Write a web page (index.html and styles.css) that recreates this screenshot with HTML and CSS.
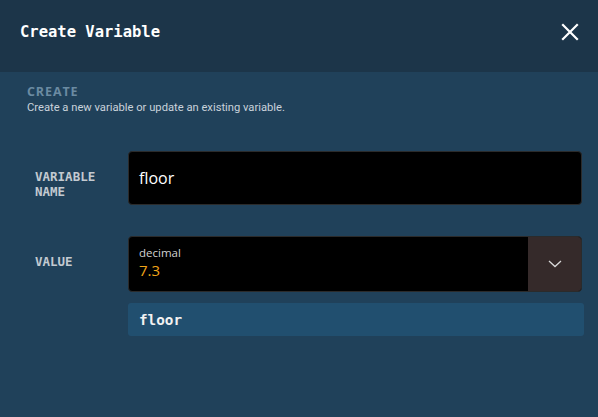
FILE: index.html
```html
<!DOCTYPE html>
<html>
<head>
<meta charset="utf-8">
<link rel="stylesheet" href="styles.css">
</head>
<body>
<div class="dialog">
  <header class="dlg-header">
    <h1 class="dlg-title">Create Variable</h1>
    <button class="close-btn" aria-label="Close">
      <svg width="18" height="18" viewBox="0 0 18 18"><path d="M2 2 L16 16 M16 2 L2 16" stroke="#fff" stroke-width="2.2" stroke-linecap="square" fill="none"/></svg>
    </button>
  </header>
  <main class="dlg-body">
    <section class="intro">
      <div class="intro-title">CREATE</div>
      <div class="intro-text">Create a new variable or update an existing variable.</div>
    </section>
    <div class="form">
      <div class="form-label">VARIABLE<br>NAME</div>
      <div class="field">
        <div class="input text-input">floor</div>
      </div>
      <div class="form-label">VALUE</div>
      <div class="field">
        <div class="input value-input">
          <div class="value-main">
            <div class="value-type">decimal</div>
            <div class="value-num">7.3</div>
          </div>
          <div class="value-drop">
            <svg width="14" height="8" viewBox="0 0 14 8"><path d="M1 1 L7 6.5 L13 1" stroke="#d8d8d8" stroke-width="1.3" fill="none"/></svg>
          </div>
        </div>
        <div class="chip">floor</div>
      </div>
    </div>
  </main>
</div>
</body>
</html>
```
FILE: styles.css
```css
* { box-sizing: border-box; }
html, body { margin: 0; padding: 0; }
body {
  width: 598px;
  height: 417px;
  background: #20415a;
  font-family: "Open Sans", "Noto Sans", sans-serif;
  overflow: hidden;
}
.dialog {
  display: flex;
  flex-direction: column;
  height: 417px;
}
.dlg-header {
  height: 72px;
  background: #1c3549;
  display: flex;
  align-items: center;
  justify-content: space-between;
  padding: 0 19px 8px 20px;
}
.dlg-title {
  margin: 0;
  font-family: "DejaVu Sans Mono", monospace;
  font-weight: bold;
  font-size: 15.5px;
  color: #ffffff;
  letter-spacing: 0;
}
.close-btn {
  background: none;
  border: 0;
  padding: 0;
  width: 18px;
  height: 18px;
  display: flex;
  cursor: pointer;
}
.dlg-body {
  flex: 1;
  background: #20415a;
  padding: 12px 0 0 0;
}
.intro {
  padding-left: 27px;
}
.intro-title {
  font-family: "Open Sans", sans-serif;
  font-weight: bold;
  font-size: 12.5px;
  letter-spacing: 0.9px;
  color: #6b8ba2;
  line-height: 16px;
}
.intro-text {
  font-family: "Roboto", sans-serif;
  font-size: 11.2px;
  letter-spacing: 0;
  color: #c9d2da;
  line-height: 16px;
}
.form {
  display: grid;
  grid-template-columns: 93px 456px;
  row-gap: 31px;
  padding-left: 35px;
  margin-top: 35px;
}
.form-label {
  font-family: "DejaVu Sans Mono", monospace;
  font-weight: bold;
  font-size: 12.5px;
  line-height: 14.5px;
  color: #c3cad1;
  padding-top: 19px;
}
.field {
  display: flex;
  flex-direction: column;
  gap: 11px;
}
.input {
  width: 454px;
  background: #000;
  border: 1px solid #2b2b2b;
  border-radius: 4px;
}
.text-input {
  height: 54px;
  display: flex;
  align-items: center;
  padding-left: 10px;
  font-size: 16px;
  color: #ffffff;
}
.value-input {
  height: 56px;
  display: flex;
  overflow: hidden;
}
.value-main {
  flex: 1;
  padding: 8px 0 0 10px;
}
.value-type {
  font-size: 11.5px;
  line-height: 16px;
  color: #d2d2d2;
}
.value-num {
  font-size: 15px;
  line-height: 18px;
  color: #f0a418;
}
.value-drop {
  width: 53px;
  background: #352a2a;
  display: flex;
  align-items: center;
  justify-content: center;
}
.chip {
  width: 456px;
  height: 33px;
  background: #214f6f;
  border-radius: 3px;
  display: flex;
  align-items: center;
  padding-left: 11px;
  font-family: "DejaVu Sans Mono", monospace;
  font-weight: bold;
  font-size: 14.3px;
  color: #f2f2f2;
}
```
